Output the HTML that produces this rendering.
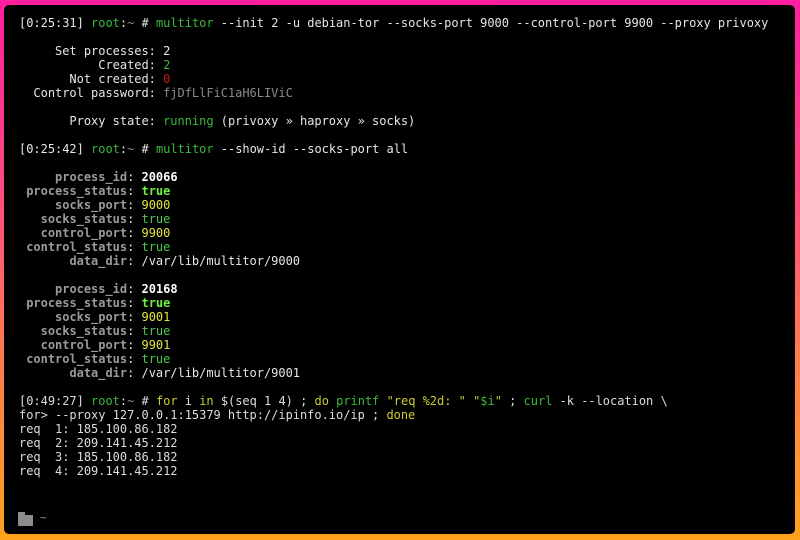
<!DOCTYPE html>
<html><head><meta charset="utf-8"><style>
html,body{margin:0;padding:0;width:800px;height:540px;overflow:hidden}
body{background:linear-gradient(180deg,#ff1fa0 0%,#ff4a80 35%,#ff7a50 65%,#ffa21c 100%)}
.term{position:absolute;left:4px;top:5px;width:791px;height:529px;background:#000;border-radius:5px}
pre{position:absolute;left:19px;top:16px;margin:0;font-family:"DejaVu Sans Mono","Liberation Mono",monospace;font-size:12px;line-height:14px;color:#e6e6e6;letter-spacing:-0.02px}
.g{color:#3cb83c}.lg{color:#5fd75f}.r{color:#c21818}.d{color:#8a8a8a}.y{color:#e5e540}.w{color:#fff;font-weight:bold}
.k{color:#9a9a9a;font-weight:bold}.bt{color:#6fef3a;font-weight:bold}.t{color:#4ec84e}
.n{color:#dcdcdc}.yy{color:#cccc30}
.folder{position:absolute;left:18px;top:515px;width:15px;height:11px;background:#8c8c8c}
.folder:before{content:"";position:absolute;left:0;top:-3px;width:7px;height:3px;background:#8c8c8c}
.tilde{position:absolute;left:40px;top:511px;color:#999;font-family:"DejaVu Sans Mono",monospace;font-size:11px}
</style></head><body><div class="term"></div>
<pre>[0:25:31] <span class="g">root</span>:<span class="d">~</span> # <span class="g">multitor</span> --init 2 -u debian-tor --socks-port 9000 --control-port 9900 --proxy privoxy

     Set processes: 2
           Created: <span class="g">2</span>
       Not created: <span class="r">0</span>
  Control password: <span class="d">fjDfLlFiC1aH6LIViC</span>

       Proxy state: <span class="g">running</span> (privoxy » haproxy » socks)

[0:25:42] <span class="g">root</span>:<span class="d">~</span> # <span class="g">multitor</span> --show-id --socks-port all

     <span class="k">process_id</span>: <span class="w">20066</span>
 <span class="k">process_status</span>: <span class="bt">true</span>
     <span class="k">socks_port</span>: <span class="y">9000</span>
   <span class="k">socks_status</span>: <span class="t">true</span>
   <span class="k">control_port</span>: <span class="y">9900</span>
 <span class="k">control_status</span>: <span class="t">true</span>
       <span class="k">data_dir</span>: /var/lib/multitor/9000

     <span class="k">process_id</span>: <span class="w">20168</span>
 <span class="k">process_status</span>: <span class="bt">true</span>
     <span class="k">socks_port</span>: <span class="y">9001</span>
   <span class="k">socks_status</span>: <span class="t">true</span>
   <span class="k">control_port</span>: <span class="y">9901</span>
 <span class="k">control_status</span>: <span class="t">true</span>
       <span class="k">data_dir</span>: /var/lib/multitor/9001

<span class="n">[0:49:27] <span class="g">root</span>:<span class="d">~</span> # <span class="yy">for</span> i <span class="yy">in</span> $(seq 1 4) ; <span class="yy">do</span> <span class="g">printf</span> <span class="yy">"req %2d: "</span> <span class="yy">"<span class="g">$i</span>"</span> ; <span class="g">curl</span> -k --location \</span>
<span class="n">for&gt; --proxy 127.0.0.1:15379 http://ipinfo.io/ip ; <span class="yy">done</span></span>
<span class="n">req  1: 185.100.86.182</span>
<span class="n">req  2: 209.141.45.212</span>
<span class="n">req  3: 185.100.86.182</span>
<span class="n">req  4: 209.141.45.212</span></pre>
<div class="folder"></div><div class="tilde">~</div>
</body></html>
